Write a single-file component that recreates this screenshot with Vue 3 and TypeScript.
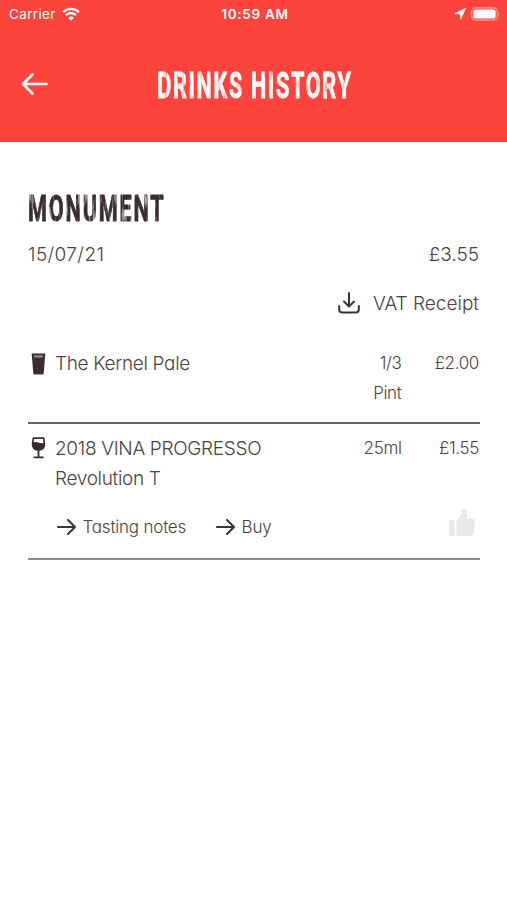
<script setup lang="ts">
interface Drink {
  id: number
  kind: 'pint' | 'wine'
  lines: string[]
  measure: string[]
  price: string
  links: string[]
}

const drinks: Drink[] = [
  { id: 1, kind: 'pint', lines: ['The Kernel Pale'], measure: ['1/3', 'Pint'], price: '£2.00', links: [] },
  {
    id: 2,
    kind: 'wine',
    lines: ['2018 VINA PROGRESSO', 'Revolution T'],
    measure: ['25ml'],
    price: '£1.55',
    links: ['Tasting notes', 'Buy'],
  },
]
</script>

<template>
  <main class="screen">
    <header class="header">
      <div class="status">
        <div class="carrier">
          <span>Carrier</span>
          <svg width="18" height="14" viewBox="0 0 18 14" fill="none" stroke="#fff" stroke-width="2.3">
            <path d="M1.1 5.1a11.2 11.2 0 0 1 15.8 0M4 8.2a7.1 7.1 0 0 1 10 0" />
            <path d="M9 13.7 6.2 10.9a4 4 0 0 1 5.6 0z" fill="#fff" stroke="none" />
          </svg>
        </div>
        <span class="time">10:59 AM</span>
        <div class="indicators">
          <svg width="12" height="12" viewBox="0 0 12 12"><path d="M11.5.5 6.7 11.3 6.2 6 .8 5.5z" fill="#fff" stroke="#fff" stroke-width=".7" stroke-linejoin="round" /></svg>
          <svg width="30" height="14" viewBox="0 0 30 14">
            <rect x=".7" y=".8" width="25.6" height="12.4" rx="3.8" fill="none" stroke="#ff9b95" stroke-width="1.2" />
            <rect x="2.4" y="2.4" width="22.2" height="9.2" rx="2.2" fill="#fff" />
            <path d="M27.6 4.6q2 2.3 0 4.8z" fill="#ff9b95" />
          </svg>
        </div>
      </div>
      <div class="titlebar">
        <svg class="back" width="28" height="24" viewBox="0 0 28 24" fill="none" stroke="#fff" stroke-width="2.7" stroke-linecap="round" stroke-linejoin="round">
          <path d="M25.500 12H2M11.500 2.500 2 12l9.500 9.500" />
        </svg>
        <svg class="title" width="204" height="44" viewBox="0 0 204 44" role="heading">
          <defs>
            <filter id="wornLight" filterUnits="userSpaceOnUse" x="-10" y="0" width="400" height="44">
              <feTurbulence type="fractalNoise" baseFrequency="0.2 0.06" numOctaves="2" seed="4" />
              <feColorMatrix values="0 0 0 0 0  0 0 0 0 0  0 0 0 0 0  -2.200 0 0 0 2.200" />
              <feComposite in="SourceGraphic" operator="in" />
            </filter>
          </defs>
          <text x="2" y="36.500" textLength="331" lengthAdjust="spacing" transform="scale(.585 1)" class="display light">DRINKS HISTORY</text>
        </svg>
      </div>
    </header>

    <section class="content">
      <svg class="venue" width="146" height="36" viewBox="0 0 146 36" role="heading">
        <defs>
          <filter id="wornDark" filterUnits="userSpaceOnUse" x="-10" y="0" width="300" height="40">
            <feTurbulence type="fractalNoise" baseFrequency="0.2 0.06" numOctaves="2" seed="8" />
            <feColorMatrix values="0 0 0 0 0  0 0 0 0 0  0 0 0 0 0  -2.200 0 0 0 2.200" />
            <feComposite in="SourceGraphic" operator="in" />
          </filter>
        </defs>
        <text x="0" y="29.500" textLength="232" lengthAdjust="spacing" transform="scale(.585 1)" class="display dark">MONUMENT</text>
      </svg>
      <div class="summary">
        <span class="date">15/07/21</span>
        <span class="total">£3.55</span>
      </div>
      <div class="receipt">
        <svg width="22" height="22" viewBox="0 0 22 22" fill="none" stroke="#3e3234" stroke-width="2" stroke-linecap="round" stroke-linejoin="round">
          <path d="M11 0v13M6 8.500l5 5 5-5M1.200 13v3.500q0 3 3 3h13.600q3 0 3-3v-3.500" />
        </svg>
        <span>VAT Receipt</span>
      </div>

      <article v-for="drink in drinks" :key="drink.id" class="drink" :class="drink.kind">
        <div class="row">
          <svg v-if="drink.kind === 'pint'" class="glass" width="15" height="22" viewBox="0 0 15 22">
            <path d="M.7.5h13.6l-.5 6.3-1.1 13.8q-.1 1-1.1 1H3.4q-1 0-1.1-1L1.2 6.8z" fill="#3b2c30" />
            <path d="M3 2.3h9l-.2 2.2H3.2z" fill="#948b8d" />
          </svg>
          <svg v-else class="glass" width="15" height="22" viewBox="0 0 15 22">
            <path d="M2.400 1.200h10.200l.8 5.200q.7 6.200-5.900 6.700Q.9 12.600 1.600 6.400z" fill="#fff" stroke="#3b2c30" stroke-width="1.7" stroke-linejoin="round" />
            <path d="M1.500 5.600q3-1.200 6 0t6 0q1 7.200-6 7.400-7-.2-6-7.400z" fill="#3b2c30" />
            <path d="M7.500 12v8M3.300 20.300h8.600" stroke="#3b2c30" stroke-width="1.800" stroke-linecap="round" />
          </svg>
          <div class="name"><div v-for="line in drink.lines" :key="line"><span>{{ line }}</span></div></div>
          <div class="measure"><div v-for="part in drink.measure" :key="part">{{ part }}</div></div>
          <span class="price">{{ drink.price }}</span>
        </div>
        <div v-if="drink.links.length" class="actions">
          <span v-for="link in drink.links" :key="link" class="link">
            <svg width="19" height="16" viewBox="0 0 19 16" fill="none" stroke="#3e3234" stroke-width="2" stroke-linecap="round" stroke-linejoin="round">
              <path d="M1 8h17M11 1l7 7-7 7" />
            </svg>
            <span>{{ link }}</span>
          </span>
          <svg class="thumb" width="28" height="30" viewBox="0 0 28 30" fill="#e9e9e9">
            <path d="M1 12h5.700v16H2.500Q1 28 1 26.500zM8.500 13l5.200-7.700V3q0-2 2.300-2 2.800 0 2.800 4.500v5.200h6.500q1.900 0 1.700 2l-1.200 11.500q-.4 3.800-4 3.800H8.500z" />
          </svg>
        </div>
      </article>
    </section>
  </main>
</template>

<style>
body {
  margin: 0;
  background: #fff;
}
</style>

<style scoped>
.screen {
  width: 507px;
  height: 900px;
  overflow: hidden;
  background: #fff;
  color: #4b4243;
  font-family: Inter, "Open Sans", sans-serif;
  font-feature-settings: "cv11";
  font-weight: 300;
}
.header {
  height: 142px;
  background: #fc443c;
  color: #fff;
}
.status {
  display: grid;
  grid-template-columns: 1fr auto 1fr;
  align-items: center;
  height: 27px;
  padding: 0 6px 0 9px;
  font-size: 13.5px;
  font-weight: 400;
  font-feature-settings: normal;
}
.carrier {
  display: flex;
  align-items: center;
  gap: 6px;
  letter-spacing: 0.35px;
}
.time {
  font-weight: 600;
  font-size: 13.5px;
  letter-spacing: 0.7px;
}
.indicators {
  display: flex;
  justify-content: flex-end;
  align-items: center;
  gap: 5px;
}
.titlebar {
  display: grid;
  grid-template-columns: 135px 1fr;
  align-items: center;
  padding: 35px 0 0 21px;
}
.display {
  font-family: Roboto, sans-serif;
  font-weight: 700;
  font-size: 37px;
  stroke-width: 0.9px;
  stroke-linejoin: round;
}
.light {
  fill: #fff;
  stroke: #fff;
  filter: url(#wornLight);
}
.dark {
  fill: #3b2c30;
  stroke: #3b2c30;
  filter: url(#wornDark);
}
.content {
  padding: 49px 28px 0 28px;
}
.venue {
  display: block;
}
.summary {
  display: flex;
  justify-content: space-between;
  height: 29px;
  margin-top: 13px;
  line-height: 29px;
  font-size: 19px;
}
.date {
  letter-spacing: 0.4px;
}
.receipt {
  display: flex;
  justify-content: flex-end;
  align-items: center;
  gap: 13px;
  height: 29px;
  margin-top: 20px;
  font-size: 19px;
}
.receipt svg {
  overflow: visible;
}
.drink {
  margin-right: -1px;
  border-bottom: 2px solid #6b6466;
}
.pint {
  height: 73px;
  padding-top: 31px;
}
.wine {
  height: 124px;
  padding-top: 10px;
  border-color: #8b8889;
}
.row {
  display: grid;
  grid-template-columns: 27px 1fr 70px 77.5px;
  padding-right: 1px;
  line-height: 29.5px;
}
.glass {
  margin: 4px 0 0 3px;
}
.wine .glass {
  margin-top: 3px;
}
.name {
  font-size: 19px;
  letter-spacing: -0.33px;
}
.measure,
.price {
  text-align: right;
  font-size: 17px;
  letter-spacing: -0.35px;
}
.actions {
  display: flex;
  align-items: center;
  height: 32px;
  margin-top: 18px;
  padding-left: 29px;
  gap: 30px;
  font-size: 17px;
  letter-spacing: -0.2px;
}
.link {
  display: flex;
  align-items: center;
  gap: 6.5px;
}
.thumb {
  margin: -8px 4px 0 auto;
}
</style>
